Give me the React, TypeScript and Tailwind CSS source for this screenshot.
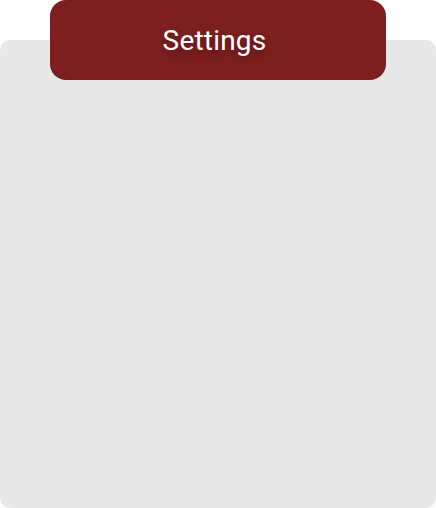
export default function App() {
  return (
    <div className="relative w-[436px] h-[508px] bg-white" style={{ fontFamily: "Roboto, sans-serif" }}>
      {/* Panel */}
      <div className="pt-10 h-full">
        <div className="h-full bg-[#e8e8e8] rounded-[10px]" />
      </div>

      {/* Header tab */}
      <div className="absolute top-0 left-[50px] w-[336px] h-20 bg-[#7d1f1f] rounded-2xl flex items-center justify-center pt-0.5 pr-[7px]">
        <h1 className="text-[28px] font-normal tracking-[0.2px] text-white [text-shadow:0_5px_8px_rgba(0,0,0,0.3)]">Settings</h1>
      </div>
    </div>
  );
}
